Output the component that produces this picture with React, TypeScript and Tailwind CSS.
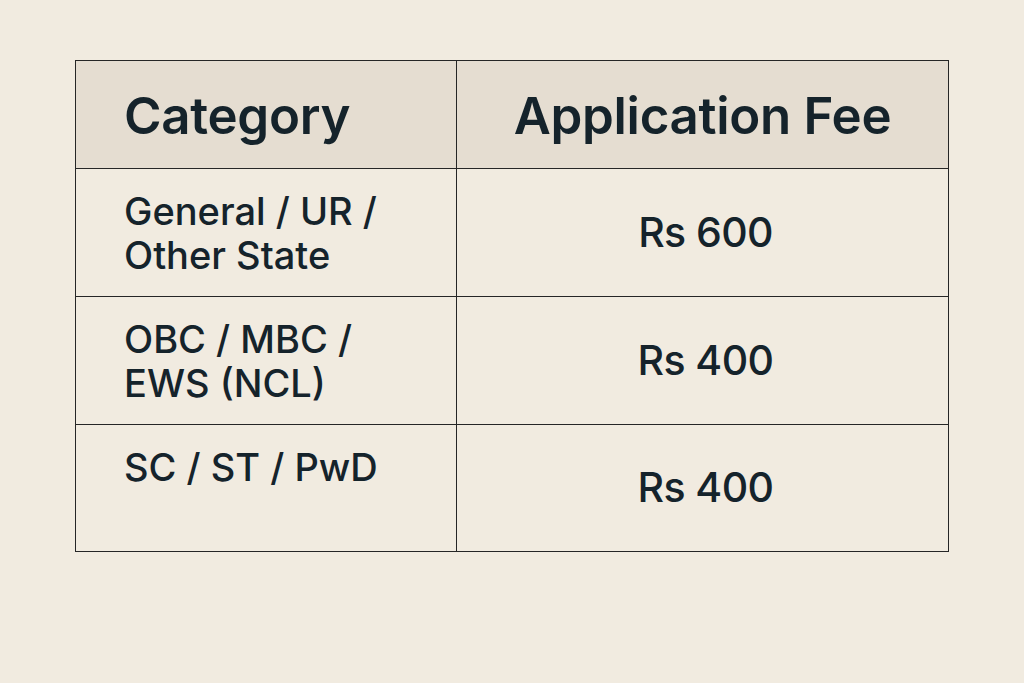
import React from 'react'

const rows = [
  { category: ['General / UR /', 'Other State'], fee: 'Rs 600' },
  { category: ['OBC / MBC /', 'EWS (NCL)'], fee: 'Rs 400' },
  { category: ['SC / ST / PwD'], fee: 'Rs 400' },
]

const App: React.FC = () => {
  return (
    <div className="min-h-[683px] w-full bg-[#f1ebe0] pt-[60px] pl-[75px] font-['Inter',sans-serif] text-[#15232b]">
      <div className="grid w-[874px] grid-cols-[381px_1fr] border-[1.5px] border-[#262626]">
        {/* header */}
        <div className="flex h-[108px] items-center border-r-[1.5px] border-b-[1.5px] border-[#262626] bg-[#e5ddd1] pl-[48px] pt-[3px] text-[51px] font-semibold tracking-[-0.3px]">
          Category
        </div>
        <div className="flex h-[108px] items-center justify-center border-b-[1.5px] border-[#262626] bg-[#e5ddd1] pt-[3px] text-[51px] font-semibold tracking-[-0.3px]">
          Application Fee
        </div>

        {rows.map((row, i) => (
          <React.Fragment key={i}>
            <div
              className={`border-r-[1.5px] border-[#262626] pl-[48px] pt-[20px] text-[38px] font-medium leading-[44px] ${
                i < rows.length - 1 ? 'h-[128px] border-b-[1.5px]' : 'h-[126px]'
              }`}
            >
              {row.category.map((line) => (
                <div key={line}>{line}</div>
              ))}
            </div>
            <div
              className={`flex items-center justify-center border-[#262626] pl-[6px] text-[41px] font-medium tracking-[-0.6px] ${
                i < rows.length - 1 ? 'h-[128px] border-b-[1.5px]' : 'h-[126px]'
              }`}
            >
              {row.fee}
            </div>
          </React.Fragment>
        ))}
      </div>
    </div>
  )
}

export default App
